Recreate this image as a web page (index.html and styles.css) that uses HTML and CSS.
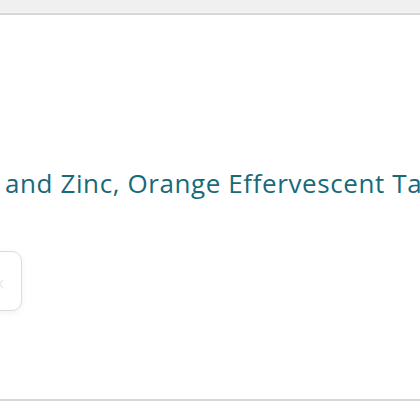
FILE: index.html
```html
<!DOCTYPE html>
<html>
<head>
<meta charset="utf-8">
<link rel="stylesheet" href="styles.css">
</head>
<body>
<div class="topbar"></div>
<div class="panel">
  <h1 class="title">and Zinc, Orange Effervescent Tablets</h1>
  <div class="btn-row"><div class="btn"><span class="chev">‹</span></div></div>
</div>
<div class="bottom-line"></div>
</body>
</html>
```
FILE: styles.css
```css
html, body { margin: 0; padding: 0; background: #fff; overflow: hidden; }
body { width: 420px; height: 420px; font-family: "Open Sans", "Liberation Sans", sans-serif; }
.topbar { height: 12px; background: #eff0ef; border-bottom: 1px solid #f6f6f6; box-shadow: 0 1px 0 #d6d6d6, 0 2px 0 #d6d6d6; }
.panel { height: 386px; display: flex; flex-direction: column; overflow: hidden; }
.title { margin: 153px 0 0 5px; font-family: "Open Sans", sans-serif; font-size: 26px; font-weight: 500; color: #186a78; white-space: nowrap; line-height: 34px; letter-spacing: 0.6px; }
.btn-row { margin-top: 51px; }
.btn { width: 40px; height: 58px; margin-left: -20px; border: 1.5px solid #dcdcdc; border-radius: 10px; background: #fff; box-shadow: 0 2px 6px rgba(0,0,0,0.06); display: flex; align-items: center; justify-content: center; }
.chev { color: #ececec; font-size: 22px; }
.bottom-line { height: 2px; background: #d6d6d6; }
```
